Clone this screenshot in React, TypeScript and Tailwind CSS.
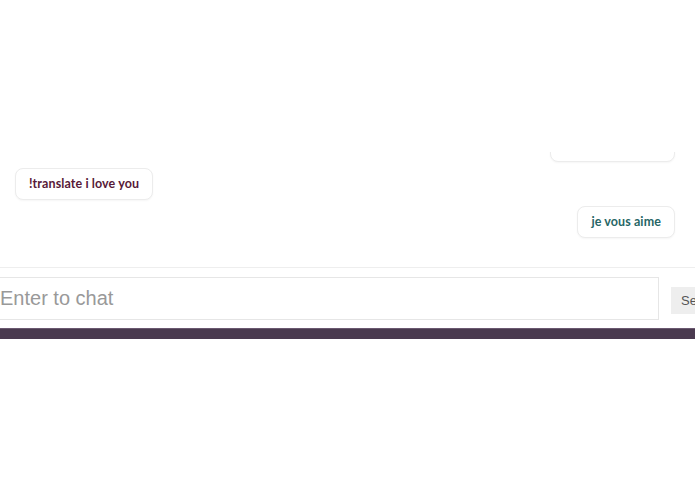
import React from "react";

type Msg = { text: string; mine: boolean };

const messages: Msg[] = [
  { text: "bonne nuit amies", mine: true },
  { text: "!translate i love you", mine: false },
  { text: "je vous aime", mine: true },
];

function Bubble({ msg }: { msg: Msg }) {
  return (
    <div className={msg.mine ? "flex justify-end" : "flex justify-start"}>
      <div
        className={
          "h-[32px] flex items-center pt-px px-[13px] rounded-[8px] border border-[#ececec] bg-white shadow-[0_1px_2px_rgba(0,0,0,0.04)] text-[12.5px] font-bold tracking-[0.1px] " +
          (msg.mine ? "text-[#276666]" : "text-[#571a38]")
        }
      >
        {msg.text}
      </div>
    </div>
  );
}

export default function App() {
  return (
    <div className="w-[695px] h-[494px] overflow-hidden bg-white" style={{ fontFamily: "Lato, sans-serif" }}>
      <div className="h-[152px]" />
      <div className="h-[115px] overflow-hidden flex flex-col justify-end gap-[6px] pl-[15px] pr-[20px] pb-[29px]">
        {messages.map((m, i) => (
          <Bubble key={i} msg={m} />
        ))}
      </div>
      <div className="h-px bg-[#eeeeee]" />
      <div className="flex items-center gap-[12px] pt-[9px] pb-[8px] ml-[-12px]">
        <input
          className="w-[671px] shrink-0 h-[43px] border border-[#e6e6e6] pl-[11px] text-[20px] text-[#555] placeholder:text-[#999] outline-none"
          style={{ fontFamily: '"Liberation Sans", Arial, sans-serif' }}
          placeholder="Enter to chat"
        />
        <button
          className="shrink-0 mt-[4px] h-[27px] px-[10px] bg-[#eeeeee] text-[13px] text-[#555]"
          style={{ fontFamily: '"Liberation Sans", Arial, sans-serif' }}
        >
          Send
        </button>
      </div>
      <div className="h-[11px] bg-[#4a3a4f] border-t border-[#6a5870]" />
    </div>
  );
}
